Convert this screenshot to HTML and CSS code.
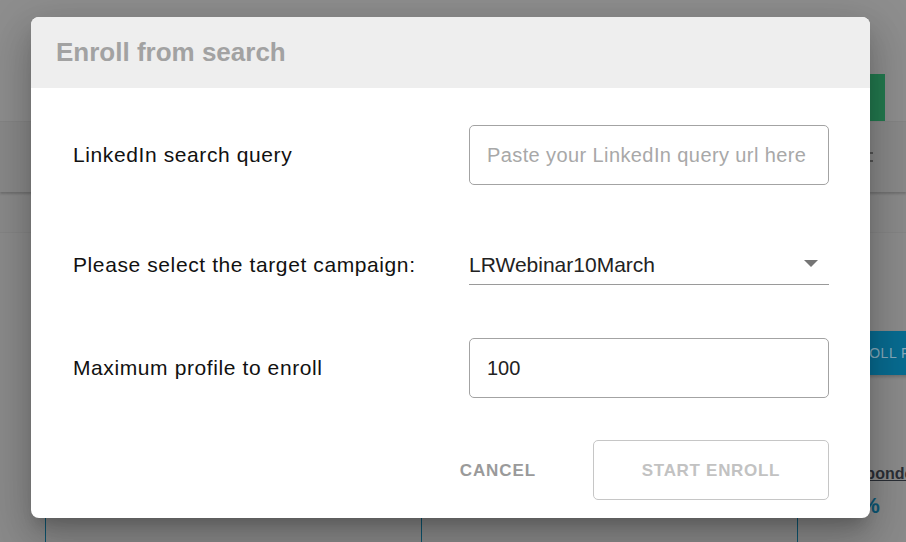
FILE: index.html
```html
<!DOCTYPE html>
<html lang="en">
<head>
<meta charset="utf-8">
<title>Enroll from search</title>
<link rel="stylesheet" href="styles.css">
</head>
<body>
<div class="page">
  <header class="topbar">
    <button class="green-btn"></button>
  </header>
  <div class="toolbar">
    <span class="kebab"><i></i><i></i></span>
  </div>
  <nav class="tabs"></nav>
  <main class="content">
    <div class="actions">
      <button class="blue-btn">ENROLL FROM SEARCH</button>
    </div>
    <div class="stats">
      <div class="stat"></div>
      <div class="stat"></div>
      <div class="stat"><a class="stat-label">Responded</a><div class="stat-value">0%</div></div>
    </div>
  </main>
</div>

<div class="dialog" role="dialog">
  <div class="dialog-header">
    <h2 class="dialog-title">Enroll from search</h2>
  </div>
  <div class="dialog-body">
    <div class="row row-first">
      <label class="label">LinkedIn search query</label>
      <div class="field-box"><span class="placeholder">Paste your LinkedIn query url here</span></div>
    </div>
    <div class="row row-select">
      <label class="label">Please select the target campaign:</label>
      <div class="select">
        <span class="select-value">LRWebinar10March</span>
        <svg class="select-arrow" width="14" height="7" viewBox="0 0 14 7"><path d="M0 0h14L7 7z" fill="#757575"/></svg>
      </div>
    </div>
    <div class="row row-max">
      <label class="label">Maximum profile to enroll</label>
      <div class="field-box"><span class="value">100</span></div>
    </div>
    <div class="dialog-actions">
      <button class="btn-cancel">CANCEL</button>
      <button class="btn-start">START ENROLL</button>
    </div>
  </div>
</div>
</body>
</html>
```
FILE: styles.css
```css
* { box-sizing: border-box; }
html, body {
  margin: 0;
  width: 906px;
  height: 542px;
  overflow: hidden;
}
body {
  position: relative;
  background: #8b8b8b;
  font-family: "Liberation Sans", Arial, sans-serif;
}
button { font-family: inherit; }

/* ---------- background page (dimmed) ---------- */
.page { width: 906px; height: 542px; overflow: hidden; }
.topbar {
  height: 122px;
  background: #8e8e8e;
  border-bottom: 1px solid #858585;
  display: flex;
  justify-content: flex-end;
  align-items: flex-start;
}
.green-btn {
  margin: 74px 21px 0 0;
  width: 150px;
  height: 47px;
  border: 0;
  background: #237a4f;
}
.toolbar {
  height: 70px;
  background: #898989;
  box-shadow: 0 2px 2px rgba(0,0,0,0.18);
  position: relative;
  display: flex;
  justify-content: flex-end;
  align-items: center;
  padding-right: 33px;
}
.kebab { display: flex; flex-direction: column; gap: 6px; }
.kebab i { display: block; width: 3px; height: 2px; background: #555; }
.tabs {
  height: 41px;
  background: #8a8a8a;
  border-bottom: 1px solid #858585;
}
.content { background: #8b8b8b; height: 320px; }
.actions {
  display: flex;
  justify-content: flex-end;
  padding-top: 98px;
  margin-right: -120px;
}
.blue-btn {
  height: 44px;
  padding: 0 16px;
  border: 0;
  background: #086c91;
  color: #86abbd;
  font-size: 14px;
  font-weight: 500;
  letter-spacing: 0.5px;
  box-shadow: 0 2px 3px rgba(0,0,0,0.2);
}
.stats {
  display: grid;
  grid-template-columns: repeat(3, 376px);
  padding-left: 45px;
  margin-top: 54px;
}
.stat {
  border-left: 1px solid #0d5570;
  height: 200px;
  padding: 36px 0 0 38px;
}
.stat-label {
  font-size: 16px;
  font-weight: 700;
  color: #2b2f36;
  text-decoration: underline;
}
.stat-value {
  margin-top: 10px;
  padding-left: 12px;
  font-size: 22px;
  font-weight: 700;
  color: #0d5876;
}

/* ---------- dialog ---------- */
.dialog {
  position: absolute;
  left: 31px;
  top: 17px;
  width: 839px;
  height: 501px;
  background: #fff;
  border-radius: 8px;
  overflow: hidden;
  box-shadow: 0 11px 15px -7px rgba(0,0,0,0.2), 0 24px 38px 3px rgba(0,0,0,0.14), 0 9px 46px 8px rgba(0,0,0,0.12);
}
.dialog-header {
  height: 71px;
  background: #eeeeee;
  display: flex;
  align-items: center;
  padding-left: 25px;
}
.dialog-title {
  margin: 0;
  font-size: 26px;
  font-weight: 700;
  color: #a2a2a2;
}
.dialog-body { padding: 37px 41px 0 42px; }
.row {
  display: grid;
  grid-template-columns: 396px 360px;
  align-items: center;
}
.row-select { margin-top: 60px; }
.row-max { margin-top: 53px; }
.label {
  font-size: 21px;
  letter-spacing: 0.6px;
  color: #111;
}
.field-box {
  height: 60px;
  border: 1px solid #a3a3a3;
  border-radius: 5px;
  display: flex;
  align-items: center;
  padding-left: 17px;
}
.placeholder {
  font-size: 20px;
  letter-spacing: 0.4px;
  color: #a8a8a8;
}
.value { font-size: 20px; color: #222; }
.select {
  height: 40px;
  border-bottom: 1px solid #9a9a9a;
  display: flex;
  align-items: center;
  justify-content: space-between;
  padding: 0 11px 0 0;
}
.select-value { font-size: 21px; color: #222; }
.select-arrow { display: block; margin-top: -2px; }
.dialog-actions {
  display: flex;
  justify-content: flex-end;
  align-items: center;
  gap: 39px;
  margin-top: 42px;
}
.btn-cancel {
  height: 60px;
  padding: 0 18px;
  border: 0;
  background: transparent;
  font-size: 17px;
  font-weight: 700;
  letter-spacing: 0.9px;
  color: #9a9a9a;
  padding-top: 2px;
}
.btn-start {
  width: 236px;
  height: 60px;
  border: 1px solid #c6c6c6;
  border-radius: 5px;
  background: #fff;
  font-size: 17px;
  font-weight: 700;
  letter-spacing: 0.7px;
  color: #c2c2c2;
  padding-top: 2px;
}
```
